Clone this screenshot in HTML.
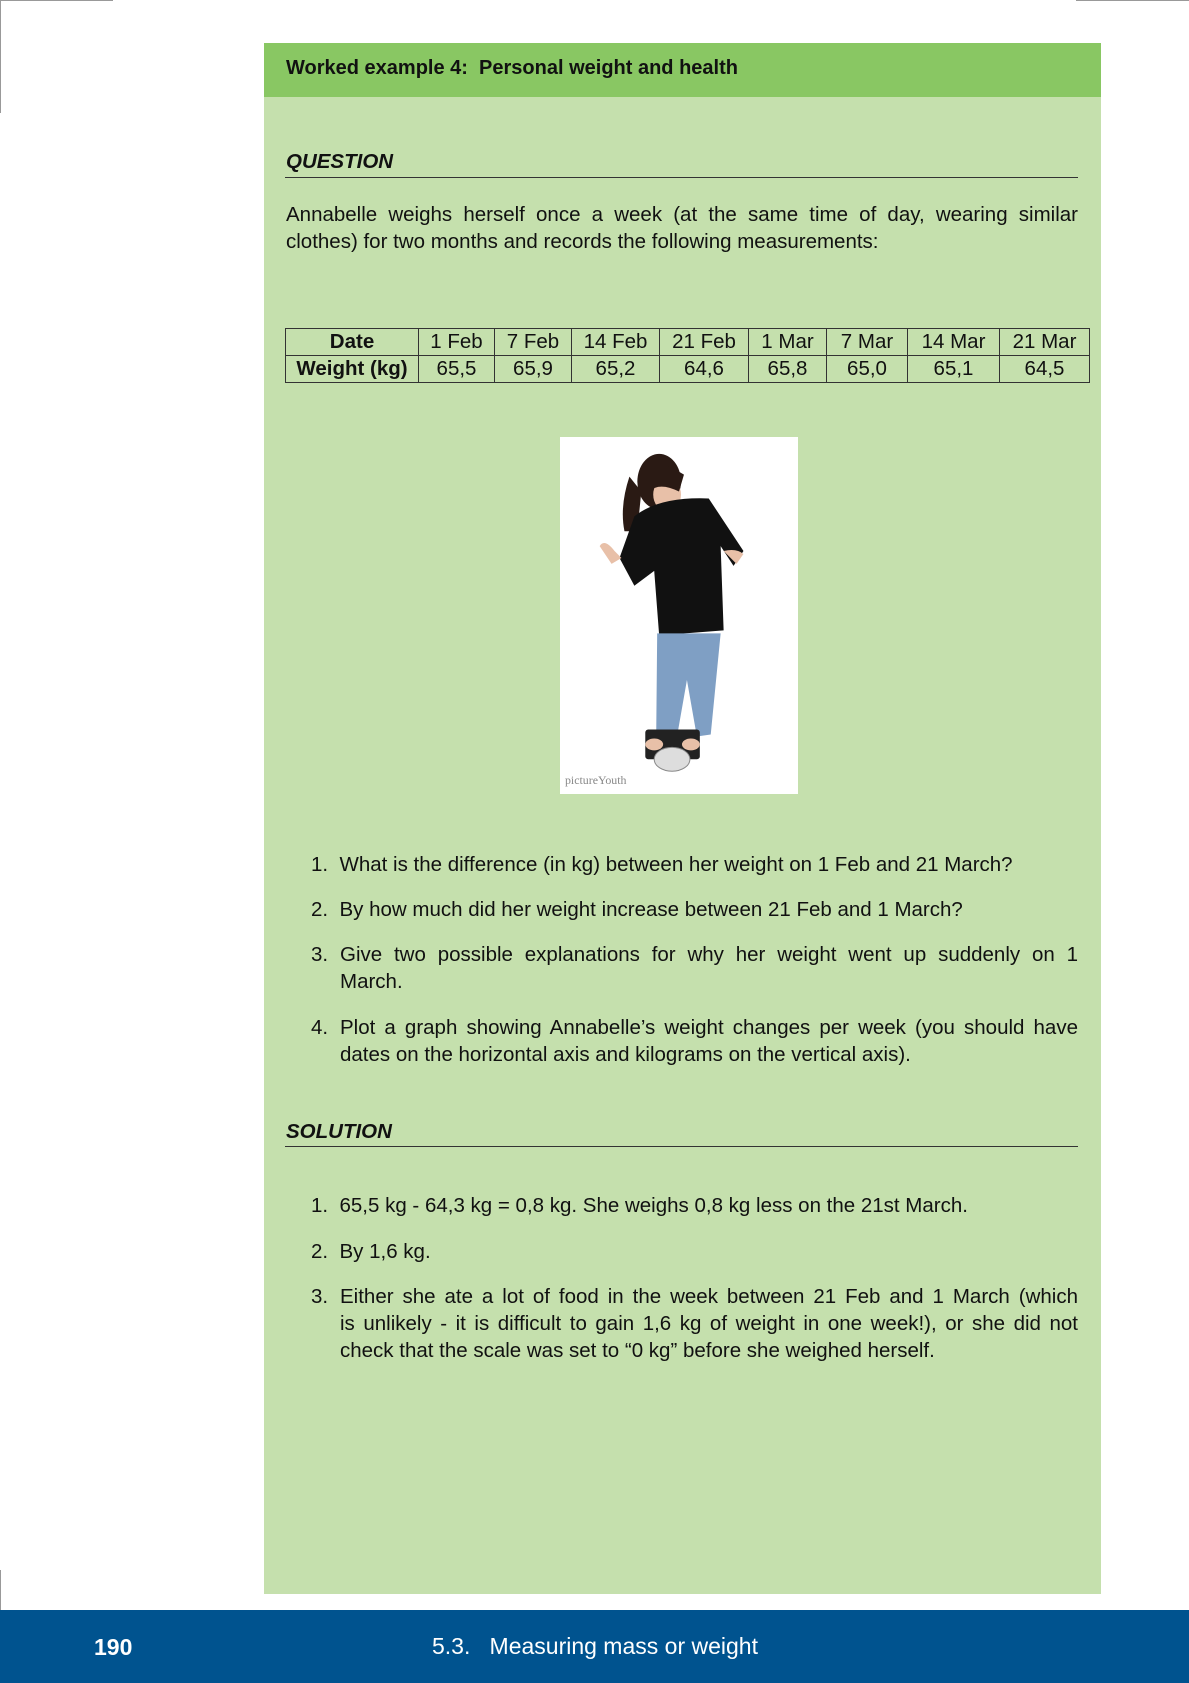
<!DOCTYPE html>
<html><head><meta charset="utf-8"><style>
*{margin:0;padding:0;box-sizing:border-box}
body{width:1189px;height:1683px;background:#fff;position:relative;font-family:"Liberation Sans",sans-serif;color:#111;overflow:hidden}
.a{position:absolute}
.box{left:264px;top:43px;width:837px;height:1551px;background:#c5e0ad}
.hdr{left:264px;top:43px;width:837px;height:54px;background:#89c763}
.t{font-size:20.5px;line-height:27px}
.j{text-align:justify;text-align-last:justify}
table{border-collapse:collapse;font-size:20.5px}
td{border:1.5px solid #333;text-align:center;height:27px;padding:0}
</style></head><body>
<div class="a" style="left:0;top:0;width:113px;height:1px;background:#999"></div>
<div class="a" style="left:0;top:0;width:1px;height:113px;background:#999"></div>
<div class="a" style="left:1076px;top:0;width:113px;height:1px;background:#999"></div>
<div class="a" style="left:0;top:1570px;width:1px;height:40px;background:#999"></div>
<div class="a box"></div>
<div class="a hdr"></div>
<div class="a t" style="left:286px;top:55px;font-weight:bold;font-size:20px">Worked example 4:&nbsp; Personal weight and health</div>
<div class="a t" style="left:286px;top:148px;font-weight:bold;font-style:italic">QUESTION</div>
<div class="a" style="left:285px;top:177px;width:793px;height:1px;background:#333"></div>
<div class="a t j" style="left:286px;top:201px;width:792px">Annabelle weighs herself once a week (at the same time of day, wearing similar</div>
<div class="a t" style="left:286px;top:228px">clothes) for two months and records the following measurements:</div>
<table class="a" style="left:285px;top:328px;width:805px">
<tr><td style="width:133px;font-weight:bold">Date</td><td style="width:76px">1 Feb</td><td style="width:77px">7 Feb</td><td style="width:88px">14 Feb</td><td style="width:89px">21 Feb</td><td style="width:78px">1 Mar</td><td style="width:81px">7 Mar</td><td style="width:92px">14 Mar</td><td>21 Mar</td></tr>
<tr><td style="font-weight:bold">Weight (kg)</td><td>65,5</td><td>65,9</td><td>65,2</td><td>64,6</td><td>65,8</td><td>65,0</td><td>65,1</td><td>64,5</td></tr>
</table>
<svg class="a" style="left:560px;top:437px" width="238" height="357" viewBox="0 0 240 360">
<rect width="240" height="360" fill="#fff"/>
<path d="M70 40 Q60 70 65 95 L78 95 L82 55 Z" fill="#2a1a14"/>
<ellipse cx="100" cy="45" rx="22" ry="28" fill="#2a1a14"/>
<ellipse cx="108" cy="58" rx="14" ry="17" fill="#e8c0a8"/>
<path d="M88 30 Q100 22 125 38 L120 55 Q100 45 90 55 Z" fill="#2a1a14"/>
<path d="M75 80 Q100 60 150 62 L185 115 L175 130 L162 110 L165 195 L100 200 L95 135 L75 150 L60 122 Z" fill="#111"/>
<path d="M40 110 Q45 102 55 115 L62 122 L52 128 Z" fill="#e8c0a8"/>
<path d="M165 115 Q178 112 185 118 L178 128 Z" fill="#e8c0a8"/>
<path d="M98 198 L162 198 L152 300 L138 302 L128 245 L118 302 L97 302 Z" fill="#7f9fc4"/>
<rect x="86" y="295" width="55" height="30" rx="3" fill="#222"/>
<ellipse cx="113" cy="325" rx="18" ry="12" fill="#ddd" stroke="#888"/>
<ellipse cx="95" cy="310" rx="9" ry="6" fill="#e8c0a8"/><ellipse cx="132" cy="310" rx="9" ry="6" fill="#e8c0a8"/>
<text x="5" y="350" font-family="Liberation Serif,serif" font-size="12" fill="#888">pictureYouth</text>
</svg>
<div class="a t" style="left:311px;top:851px">1.&nbsp; What is the difference (in kg) between her weight on 1 Feb and 21 March?</div>
<div class="a t" style="left:311px;top:896px">2.&nbsp; By how much did her weight increase between 21 Feb and 1 March?</div>
<div class="a t" style="left:311px;top:941px">3.</div>
<div class="a t j" style="left:340px;top:941px;width:738px">Give two possible explanations for why her weight went up suddenly on 1</div>
<div class="a t" style="left:340px;top:968px">March.</div>
<div class="a t" style="left:311px;top:1014px">4.</div>
<div class="a t j" style="left:340px;top:1014px;width:738px">Plot a graph showing Annabelle’s weight changes per week (you should have</div>
<div class="a t" style="left:340px;top:1041px">dates on the horizontal axis and kilograms on the vertical axis).</div>
<div class="a t" style="left:286px;top:1118px;font-weight:bold;font-style:italic">SOLUTION</div>
<div class="a" style="left:285px;top:1146px;width:793px;height:1px;background:#333"></div>
<div class="a t" style="left:311px;top:1192px">1.&nbsp; 65,5 kg - 64,3 kg = 0,8 kg. She weighs 0,8 kg less on the 21st March.</div>
<div class="a t" style="left:311px;top:1238px">2.&nbsp; By 1,6 kg.</div>
<div class="a t" style="left:311px;top:1283px">3.</div>
<div class="a t j" style="left:340px;top:1283px;width:738px">Either she ate a lot of food in the week between 21 Feb and 1 March (which</div>
<div class="a t j" style="left:340px;top:1310px;width:738px">is unlikely - it is difficult to gain 1,6 kg of weight in one week!), or she did not</div>
<div class="a t" style="left:340px;top:1337px">check that the scale was set to “0 kg” before she weighed herself.</div>
<div class="a" style="left:0;top:1610px;width:1189px;height:73px;background:#00538f"></div>
<div class="a" style="left:94px;top:1634px;color:#fff;font-weight:bold;font-size:23px">190</div>
<div class="a" style="left:432px;top:1633px;color:#fff;font-size:23px">5.3.&nbsp;&nbsp; Measuring mass or weight</div>
</body></html>
